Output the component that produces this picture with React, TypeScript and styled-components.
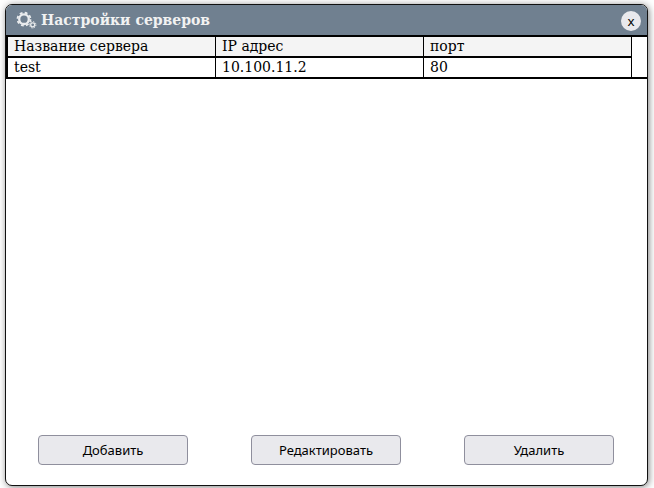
import styled, { createGlobalStyle } from "styled-components";

const GlobalStyle = createGlobalStyle`
  html, body { margin: 0; padding: 0; background: #fff; }
  body { width: 654px; height: 488px; overflow: hidden; font-family: "DejaVu Serif", serif; }
`;

const Page = styled.div`
  width: 654px;
  height: 488px;
  padding: 4px 6px 2px 5px;
  box-sizing: border-box;
`;

const Window = styled.div`
  height: 100%;
  display: flex;
  flex-direction: column;
  box-sizing: border-box;
  background: #fff;
  border: 1px solid #111;
  border-radius: 7px;
  box-shadow: 1px 1px 7px rgba(0, 0, 0, 0.5);
  overflow: hidden;
`;

const Header = styled.div`
  height: 30px;
  flex: none;
  display: flex;
  align-items: center;
  padding: 0 6px 0 10px;
  background: #708090;
  color: #f2f2f2;
`;

const Title = styled.span`
  margin-left: 6px;
  font-size: 14px;
  font-weight: 700;
`;

const Close = styled.button`
  width: 20px;
  height: 20px;
  margin-left: auto;
  margin-top: 1px;
  padding: 0;
  border: none;
  border-radius: 50%;
  background: #e9e9ed;
  color: #000;
  font-family: "Noto Sans", sans-serif;
  font-size: 13.33px;
  line-height: 20px;
`;

const Table = styled.div`
  flex: none;
  display: grid;
  grid-template-columns: 208px 208px 208px 1fr;
  grid-auto-rows: 19px;
  row-gap: 2px;
  padding-left: 2px;
  border-top: 2px solid #000;
  border-bottom: 2px solid #000;
  background: linear-gradient(#000, #000) 0 0 / 626px 100% no-repeat;
`;

const Cell = styled.div<{ $head?: boolean }>`
  padding-left: 6px;
  background: ${(p) => (p.$head ? "#f4f4f4" : "#fff")};
  border-right: 1px solid #000;
  color: #000;
  font-size: 14px;
  line-height: 19px;
  box-sizing: border-box;
`;

const Filler = styled.div`
  grid-column: 4;
  grid-row: 1 / 3;
  background: #fff;
`;

const Body = styled.div`
  flex: 1;
`;

const Footer = styled.div`
  flex: none;
  display: flex;
  justify-content: space-between;
  padding: 0 33px 20px 32px;
`;

const Action = styled.button`
  width: 150px;
  height: 30px;
  box-sizing: border-box;
  background: #e9e9ed;
  border: 1px solid #8f8f9d;
  border-radius: 4px;
  color: #000;
  font-family: "Noto Sans", sans-serif;
  font-size: 13px;
`;

const Gear = styled.svg`
  flex: none;
  overflow: visible;
`;

function GearIcon() {
  return (
    <Gear width="19" height="19" viewBox="0 0 19 19" fill="none">
      <g stroke="#eaecee">
        <circle cx="8" cy="8.2" r="4.8" strokeWidth="2.3" />
        <circle cx="8" cy="8.2" r="6.5" strokeWidth="1.8" strokeDasharray="2.8 2.3" />
        <circle cx="16.7" cy="13.8" r="2" strokeWidth="1.3" />
        <circle cx="16.7" cy="13.8" r="3.2" strokeWidth="1" strokeDasharray="1.4 1.11" />
      </g>
    </Gear>
  );
}

export default function App() {
  return (
    <>
      <GlobalStyle />
      <Page>
        <Window>
          <Header>
            <GearIcon />
            <Title>Настройки серверов</Title>
            <Close>x</Close>
          </Header>
          <Table>
            <Cell $head>Название сервера</Cell>
            <Cell $head>IP адрес</Cell>
            <Cell $head>порт</Cell>
            <Filler />
            <Cell>test</Cell>
            <Cell>10.100.11.2</Cell>
            <Cell>80</Cell>
          </Table>
          <Body />
          <Footer>
            <Action>Добавить</Action>
            <Action>Редактировать</Action>
            <Action>Удалить</Action>
          </Footer>
        </Window>
      </Page>
    </>
  );
}
